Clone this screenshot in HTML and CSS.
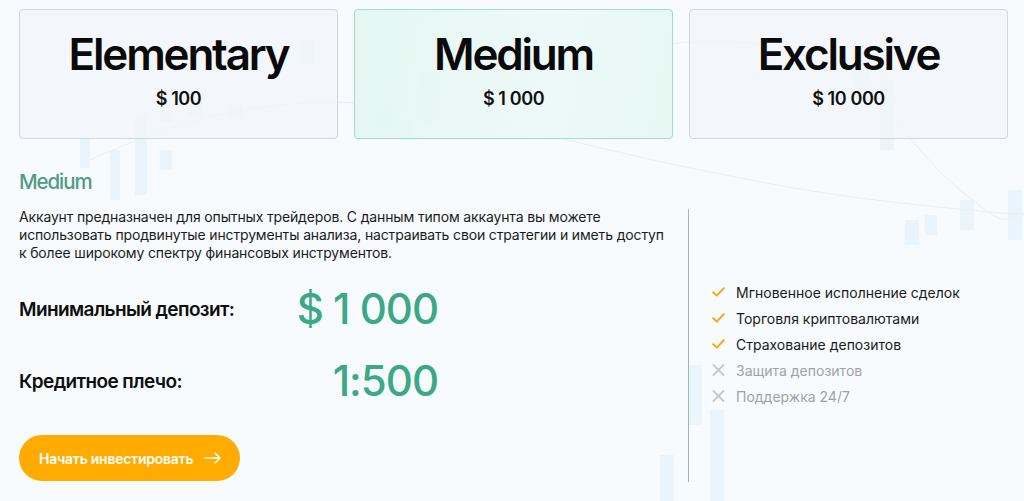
FILE: index.html
```html
<!DOCTYPE html>
<html lang="ru">
<head>
<meta charset="utf-8">
<title>Тарифы</title>
<link rel="stylesheet" href="styles.css">
</head>
<body>
<div class="page">
  <svg class="bg-chart" width="1024" height="501" viewBox="0 0 1024 501" aria-hidden="true">
    <g fill="#eaf4fc">
      <rect x="300" y="40" width="14" height="24"/>
      <rect x="80" y="138" width="10" height="30"/>
      <rect x="110" y="150" width="10" height="50"/>
      <rect x="135" y="115" width="12" height="80"/>
      <rect x="160" y="150" width="12" height="20"/>
      <rect x="160" y="110" width="12" height="12"/>
      <rect x="188" y="105" width="14" height="12"/>
      <rect x="228" y="105" width="14" height="12"/>
      <rect x="378" y="108" width="14" height="20"/>
      <rect x="400" y="120" width="14" height="20"/>
      <rect x="420" y="70" width="14" height="55"/>
      <rect x="520" y="35" width="14" height="50"/>
      <rect x="510" y="80" width="14" height="20"/>
      <rect x="855" y="60" width="14" height="40"/>
      <rect x="880" y="80" width="14" height="70"/>
      <rect x="1008" y="190" width="14" height="50"/>
      <rect x="925" y="215" width="12" height="20"/>
      <rect x="960" y="200" width="14" height="30"/>
      <rect x="905" y="220" width="14" height="25"/>
      <rect x="688" y="365" width="14" height="60"/>
      <rect x="710" y="410" width="14" height="91"/>
      <rect x="660" y="455" width="14" height="46"/>
    </g>
    <g fill="none" stroke="#e8eff6" stroke-width="1">
      <path d="M90 160 C 200 110, 300 90, 420 110 S 600 150, 700 170 S 850 200, 1024 215"/>
      <path d="M600 60 C 700 30, 760 40, 820 60 S 900 140, 960 190 S 1000 210, 1024 214"/>
    </g>
  </svg>

  <section class="plans">
    <div class="plan">
      <div class="plan-name">Elementary</div>
      <div class="plan-price">$ 100</div>
    </div>
    <div class="plan plan-active">
      <div class="plan-name">Medium</div>
      <div class="plan-price">$ 1 000</div>
    </div>
    <div class="plan">
      <div class="plan-name">Exclusive</div>
      <div class="plan-price">$ 10 000</div>
    </div>
  </section>

  <section class="details">
    <div class="details-main">
      <h2 class="details-title">Medium</h2>
      <p class="details-text">Аккаунт предназначен для опытных трейдеров. С данным типом аккаунта вы можете использовать продвинутые инструменты анализа, настраивать свои стратегии и иметь доступ к более широкому спектру финансовых инструментов.</p>
      <div class="stats">
        <div class="stat-label">Минимальный депозит:</div>
        <div class="stat-value">$ 1 000</div>
        <div class="stat-label">Кредитное плечо:</div>
        <div class="stat-value">1:500</div>
      </div>
      <a class="btn" href="#">Начать инвестировать
        <svg class="btn-arrow" width="18" height="12" viewBox="0 0 18 12"><path d="M1 6h15M11 1l5 5-5 5" fill="none" stroke="#fff" stroke-width="1.5" stroke-linecap="round" stroke-linejoin="round"/></svg>
      </a>
    </div>
    <div class="details-side">
      <ul class="features">
        <li class="feat on"><svg class="ico" width="13" height="10" viewBox="0 0 13 10"><path d="M1.2 5.2l3.6 3.4L11.8 1.2" fill="none" stroke="#f7a81b" stroke-width="2" stroke-linecap="round" stroke-linejoin="round"/></svg>Мгновенное исполнение сделок</li>
        <li class="feat on"><svg class="ico" width="13" height="10" viewBox="0 0 13 10"><path d="M1.2 5.2l3.6 3.4L11.8 1.2" fill="none" stroke="#f7a81b" stroke-width="2" stroke-linecap="round" stroke-linejoin="round"/></svg>Торговля криптовалютами</li>
        <li class="feat on"><svg class="ico" width="13" height="10" viewBox="0 0 13 10"><path d="M1.2 5.2l3.6 3.4L11.8 1.2" fill="none" stroke="#f7a81b" stroke-width="2" stroke-linecap="round" stroke-linejoin="round"/></svg>Страхование депозитов</li>
        <li class="feat off"><svg class="ico" width="13" height="12" viewBox="0 0 13 12"><path d="M1.5 1l10 10M11.5 1l-10 10" fill="none" stroke="#c5c8cc" stroke-width="1.8" stroke-linecap="round"/></svg>Защита депозитов</li>
        <li class="feat off"><svg class="ico" width="13" height="12" viewBox="0 0 13 12"><path d="M1.5 1l10 10M11.5 1l-10 10" fill="none" stroke="#c5c8cc" stroke-width="1.8" stroke-linecap="round"/></svg>Поддержка 24/7</li>
      </ul>
    </div>
  </section>
</div>
</body>
</html>
```

FILE: styles.css
```css
* { box-sizing: border-box; }

html, body {
  margin: 0;
  padding: 0;
}

body {
  background: #f7fbfe;
  font-family: Inter, "Noto Sans", "Liberation Sans", sans-serif;
  color: #111;
  width: 1024px;
  height: 501px;
  overflow: hidden;
}

.page {
  position: relative;
  padding: 9px 16px 0 19px;
  height: 501px;
}

.bg-chart {
  position: absolute;
  left: 0;
  top: 0;
  z-index: 0;
}

.plans, .details {
  position: relative;
  z-index: 1;
}

.plans {
  display: grid;
  grid-template-columns: repeat(3, 1fr);
  column-gap: 16px;
}

.plan {
  height: 130px;
  border: 1px solid #ccd8e2;
  border-radius: 4px;
  background: rgba(241, 246, 250, 0.75);
  display: flex;
  flex-direction: column;
  align-items: center;
  padding-top: 17px;
}

.plan-active {
  border-color: #a3dcc7;
  background: linear-gradient(100deg, rgba(226, 247, 240, 0.9), rgba(236, 249, 247, 0.85) 60%, rgba(228, 247, 241, 0.9));
}

.plan-name {
  font-size: 44px;
  font-weight: 600;
  letter-spacing: -2.2px;
  line-height: 54px;
  color: #0a0a0a;
}

.plan-price {
  margin-top: 7px;
  font-size: 18px;
  font-weight: 600;
  line-height: 22px;
  letter-spacing: -0.4px;
  color: #111;
}

.details {
  display: flex;
  margin-top: 31px;
}

.details-main {
  width: 669px;
  padding-right: 5px;
}

.details-title {
  margin: 0;
  font-size: 20.5px;
  font-weight: 500;
  letter-spacing: -1.1px;
  line-height: 24px;
  color: #4f9c84;
}

.details-text {
  margin: 14px 0 0;
  width: 652px;
  font-size: 14px;
  line-height: 18px;
  letter-spacing: -0.15px;
  color: #1b1b1b;
}

.stats {
  display: grid;
  grid-template-columns: 250px 169px;
  align-items: center;
  row-gap: 22px;
  margin-top: 22px;
}

.stat-label {
  font-size: 19px;
  font-weight: 600;
  letter-spacing: -0.6px;
  color: #0e0e0e;
}

.stat-value {
  text-align: right;
  font-size: 42px;
  font-weight: 500;
  letter-spacing: -1px;
  line-height: 50px;
  color: #3ba886;
}

.btn {
  margin-top: 29px;
  display: flex;
  align-items: center;
  gap: 11px;
  height: 46px;
  width: 221px;
  padding-left: 20px;
  border-radius: 23px;
  background: #ffab00;
  color: #fff;
  font-size: 14px;
  font-weight: 600;
  letter-spacing: -0.25px;
  text-decoration: none;
}

.btn-arrow { display: block; }

.details-side {
  margin-top: 39px;
  height: 273px;
  border-left: 1px solid #a9b1b8;
  padding-left: 23px;
  padding-top: 70px;
  flex: 1;
}

.features {
  list-style: none;
  margin: 0;
  padding: 0;
}

.feat {
  display: flex;
  align-items: center;
  height: 26px;
  font-size: 14px;
  color: #1a1a1a;
}

.feat .ico {
  flex: none;
  margin-right: 11px;
}

.feat.off {
  color: #9ea2a7;
}
```
